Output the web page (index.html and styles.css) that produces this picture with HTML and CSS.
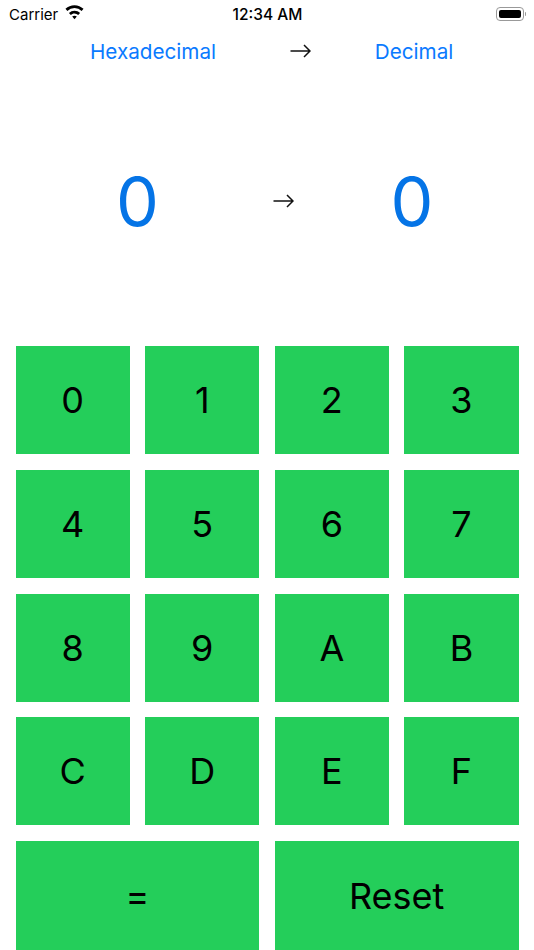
FILE: index.html
```html
<!DOCTYPE html>
<html lang="en">
<head>
  <meta charset="UTF-8">
  <meta name="viewport" content="width=device-width, initial-scale=1.0">
  <title>Hexadecimal to Decimal</title>
  <link rel="stylesheet" href="styles.css">
</head>
<body>
  <div class="screen">
    <!-- status bar -->
    <div class="status-bar">
      <div class="status-left">
        <span>Carrier</span>
        <svg class="wifi" width="21" height="16" viewBox="0 0 20 15">
          <path d="M10 1c3.300 0 6.300 1.300 8.600 3.500l-1.800 2.100A9.700 9.700 0 0 0 10 3.800a9.700 9.700 0 0 0-6.800 2.800L1.400 4.500A12.300 12.300 0 0 1 10 1z" fill="#000"/>
          <path d="M10 6.200c2 0 3.900 .8 5.300 2.200l-1.800 2A5 5 0 0 0 10 8.900c-1.400 0-2.600 .6-3.500 1.500l-1.800-2A7.500 7.500 0 0 1 10 6.200z" fill="#000"/>
          <path d="M10 11c.9 0 1.600 .3 2.200 .9L10 14.400l-2.200-2.500c.6-.6 1.300-.9 2.200-.9z" fill="#000"/>
        </svg>
      </div>
      <div class="status-time">12:34 AM</div>
      <div class="status-right">
        <div class="battery"><div class="battery-level"></div></div>
        <div class="battery-cap"></div>
      </div>
    </div>

    <!-- conversion picker -->
    <div class="picker">
      <button class="picker-link picker-from">Hexadecimal</button>
      <svg class="picker-arrow" width="21" height="14" viewBox="0 0 21 14">
        <path d="M0.500 7H20M14 1l6 6-6 6" fill="none" stroke="#111" stroke-width="1.500"/>
      </svg>
      <button class="picker-link picker-to">Decimal</button>
    </div>

    <!-- values -->
    <div class="display">
      <div class="value value-from">0</div>
      <svg class="display-arrow" width="21" height="14" viewBox="0 0 21 14">
        <path d="M0.500 7H20M14 1l6 6-6 6" fill="none" stroke="#111" stroke-width="1.500"/>
      </svg>
      <div class="value value-to">0</div>
    </div>

    <!-- keypad -->
    <div class="keypad">
      <button class="key">0</button>
      <button class="key">1</button>
      <button class="key">2</button>
      <button class="key">3</button>
      <button class="key">4</button>
      <button class="key">5</button>
      <button class="key">6</button>
      <button class="key">7</button>
      <button class="key">8</button>
      <button class="key">9</button>
      <button class="key">A</button>
      <button class="key">B</button>
      <button class="key">C</button>
      <button class="key">D</button>
      <button class="key">E</button>
      <button class="key">F</button>
      <button class="key key-wide">=</button>
      <button class="key key-wide">Reset</button>
    </div>
  </div>
</body>
</html>
```

FILE: styles.css
```css
html, body {
  margin: 0;
  padding: 0;
  background-color: #fff;
}
body {
  font-family: Inter, "Liberation Sans", sans-serif;
  color: #000;
}
.screen {
  width: 534px;
  height: 950px;
  overflow: hidden;
  display: flex;
  flex-direction: column;
}
.status-bar {
  height: 28px;
  flex-shrink: 0;
  display: grid;
  grid-template-columns: 1fr auto 1fr;
  align-items: center;
  font-size: 15px;
  padding: 0 8px 0 9px;
}
.status-left {
  display: flex;
  align-items: center;
  gap: 6px;
}
.wifi {
  margin-top: -4px;
}
.status-time {
  font-size: 15.500px;
  font-weight: 500;
}
.status-right {
  display: flex;
  align-items: center;
  justify-content: flex-end;
}
.battery {
  width: 28px;
  height: 14px;
  padding: 2px;
  box-sizing: border-box;
  border: 1px solid #999;
  border-radius: 4px;
}
.battery-level {
  height: 100%;
  background-color: #000;
  border-radius: 2px;
}
.battery-cap {
  width: 1.500px;
  height: 4px;
  margin-left: 0.500px;
  background-color: #999;
  border-radius: 0 1px 1px 0;
}
.picker {
  height: 48px;
  flex-shrink: 0;
  display: flex;
  align-items: center;
  padding-bottom: 2px;
  box-sizing: border-box;
}
.picker-link {
  padding: 0;
  border: none;
  background: none;
  font-family: inherit;
  font-size: 20.700px;
  color: #0a7aff;
  text-align: center;
}
.picker-from {
  width: 306px;
}
.picker-arrow {
  margin-left: -16px;
}
.picker-to {
  width: 206px;
}
.display {
  height: 270px;
  flex-shrink: 0;
  display: flex;
  align-items: center;
  padding-bottom: 20px;
  box-sizing: border-box;
}
.value {
  font-size: 68px;
  font-weight: 400;
  color: #0574e6;
  text-align: center;
  line-height: 1;
}
.value-from {
  width: 275px;
}
.display-arrow {
  margin-left: -2px;
}
.value-to {
  width: 236px;
}
.keypad {
  display: grid;
  grid-template-columns: repeat(4, 114.300px);
  grid-template-rows: repeat(4, 108px) 110px;
  gap: 15.800px 15.300px;
  padding-left: 15.500px;
}
.key {
  padding: 0;
  border: none;
  border-radius: 0;
  background-color: #24ce5a;
  color: #000;
  font-family: inherit;
  font-size: 36px;
  font-weight: 380;
}
.key-wide {
  grid-column: span 2;
}
```
